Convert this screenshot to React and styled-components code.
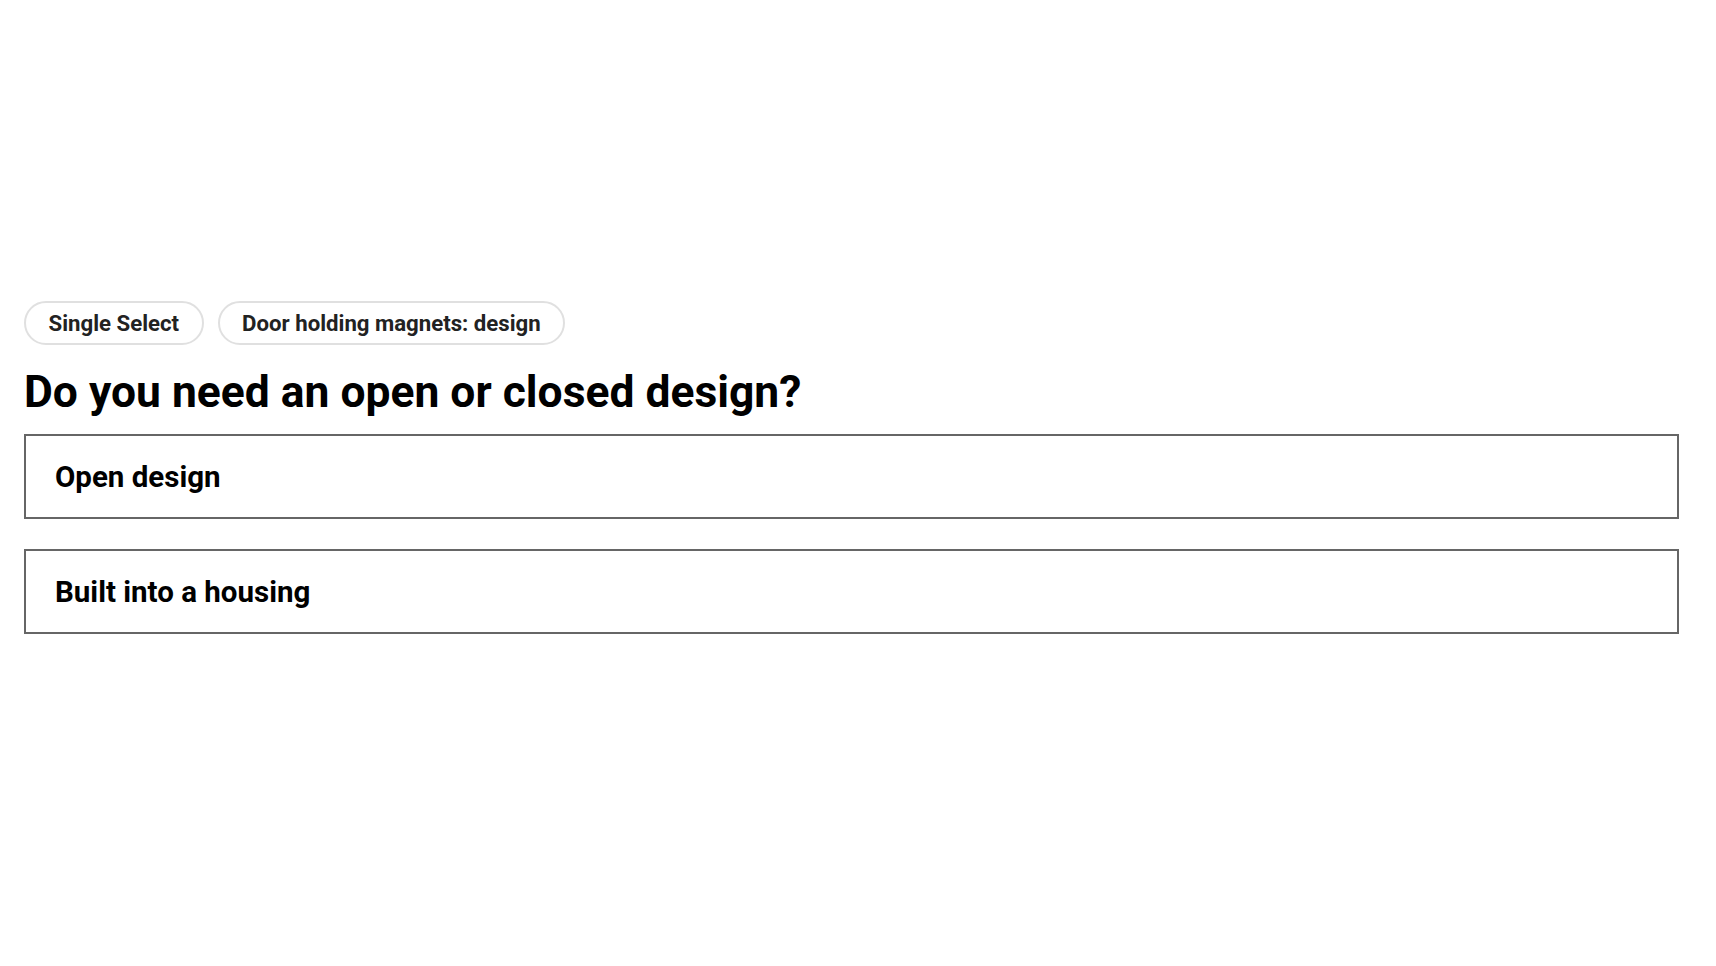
import React from "react";
import styled, { createGlobalStyle } from "styled-components";

const GlobalStyle = createGlobalStyle`
  body {
    margin: 0;
    background: #ffffff;
    font-family: Roboto, "Liberation Sans", sans-serif;
    color: #000000;
  }
`;

const options = ["Open design", "Built into a housing"];

const App = () => {
  return (
    <>
      <GlobalStyle />
      <StyledPage>
        <StyledTags>
          <StyledTag>Single Select</StyledTag>
          <StyledTag>Door holding magnets: design</StyledTag>
        </StyledTags>
        <StyledTitle>Do you need an open or closed design?</StyledTitle>
        <StyledOptions>
          {options.map((label) => (
            <StyledOption key={label}>{label}</StyledOption>
          ))}
        </StyledOptions>
      </StyledPage>
    </>
  );
};

const StyledPage = styled.div`
  padding: 301px 37px 0 24px;
`;
const StyledTags = styled.div`
  display: flex;
  gap: 14px;
`;
const StyledTag = styled.span`
  display: inline-flex;
  align-items: center;
  height: 44px;
  box-sizing: border-box;
  padding: 0 22.5px;
  border: 2px solid #e0e0e0;
  border-radius: 22px;
  font-size: 22.2px;
  font-weight: 700;
  color: #222;
`;
const StyledTitle = styled.h1`
  margin: 21px 0 15px;
  font-size: 44.4px;
  font-weight: 700;
  line-height: 1.2;
`;
const StyledOptions = styled.div`
  display: flex;
  flex-direction: column;
  gap: 30px;
`;
const StyledOption = styled.div`
  display: flex;
  align-items: center;
  height: 85px;
  box-sizing: border-box;
  padding: 0 29px;
  border: 2px solid #666;
  font-size: 29.5px;
  font-weight: 700;
`;

export default App;
